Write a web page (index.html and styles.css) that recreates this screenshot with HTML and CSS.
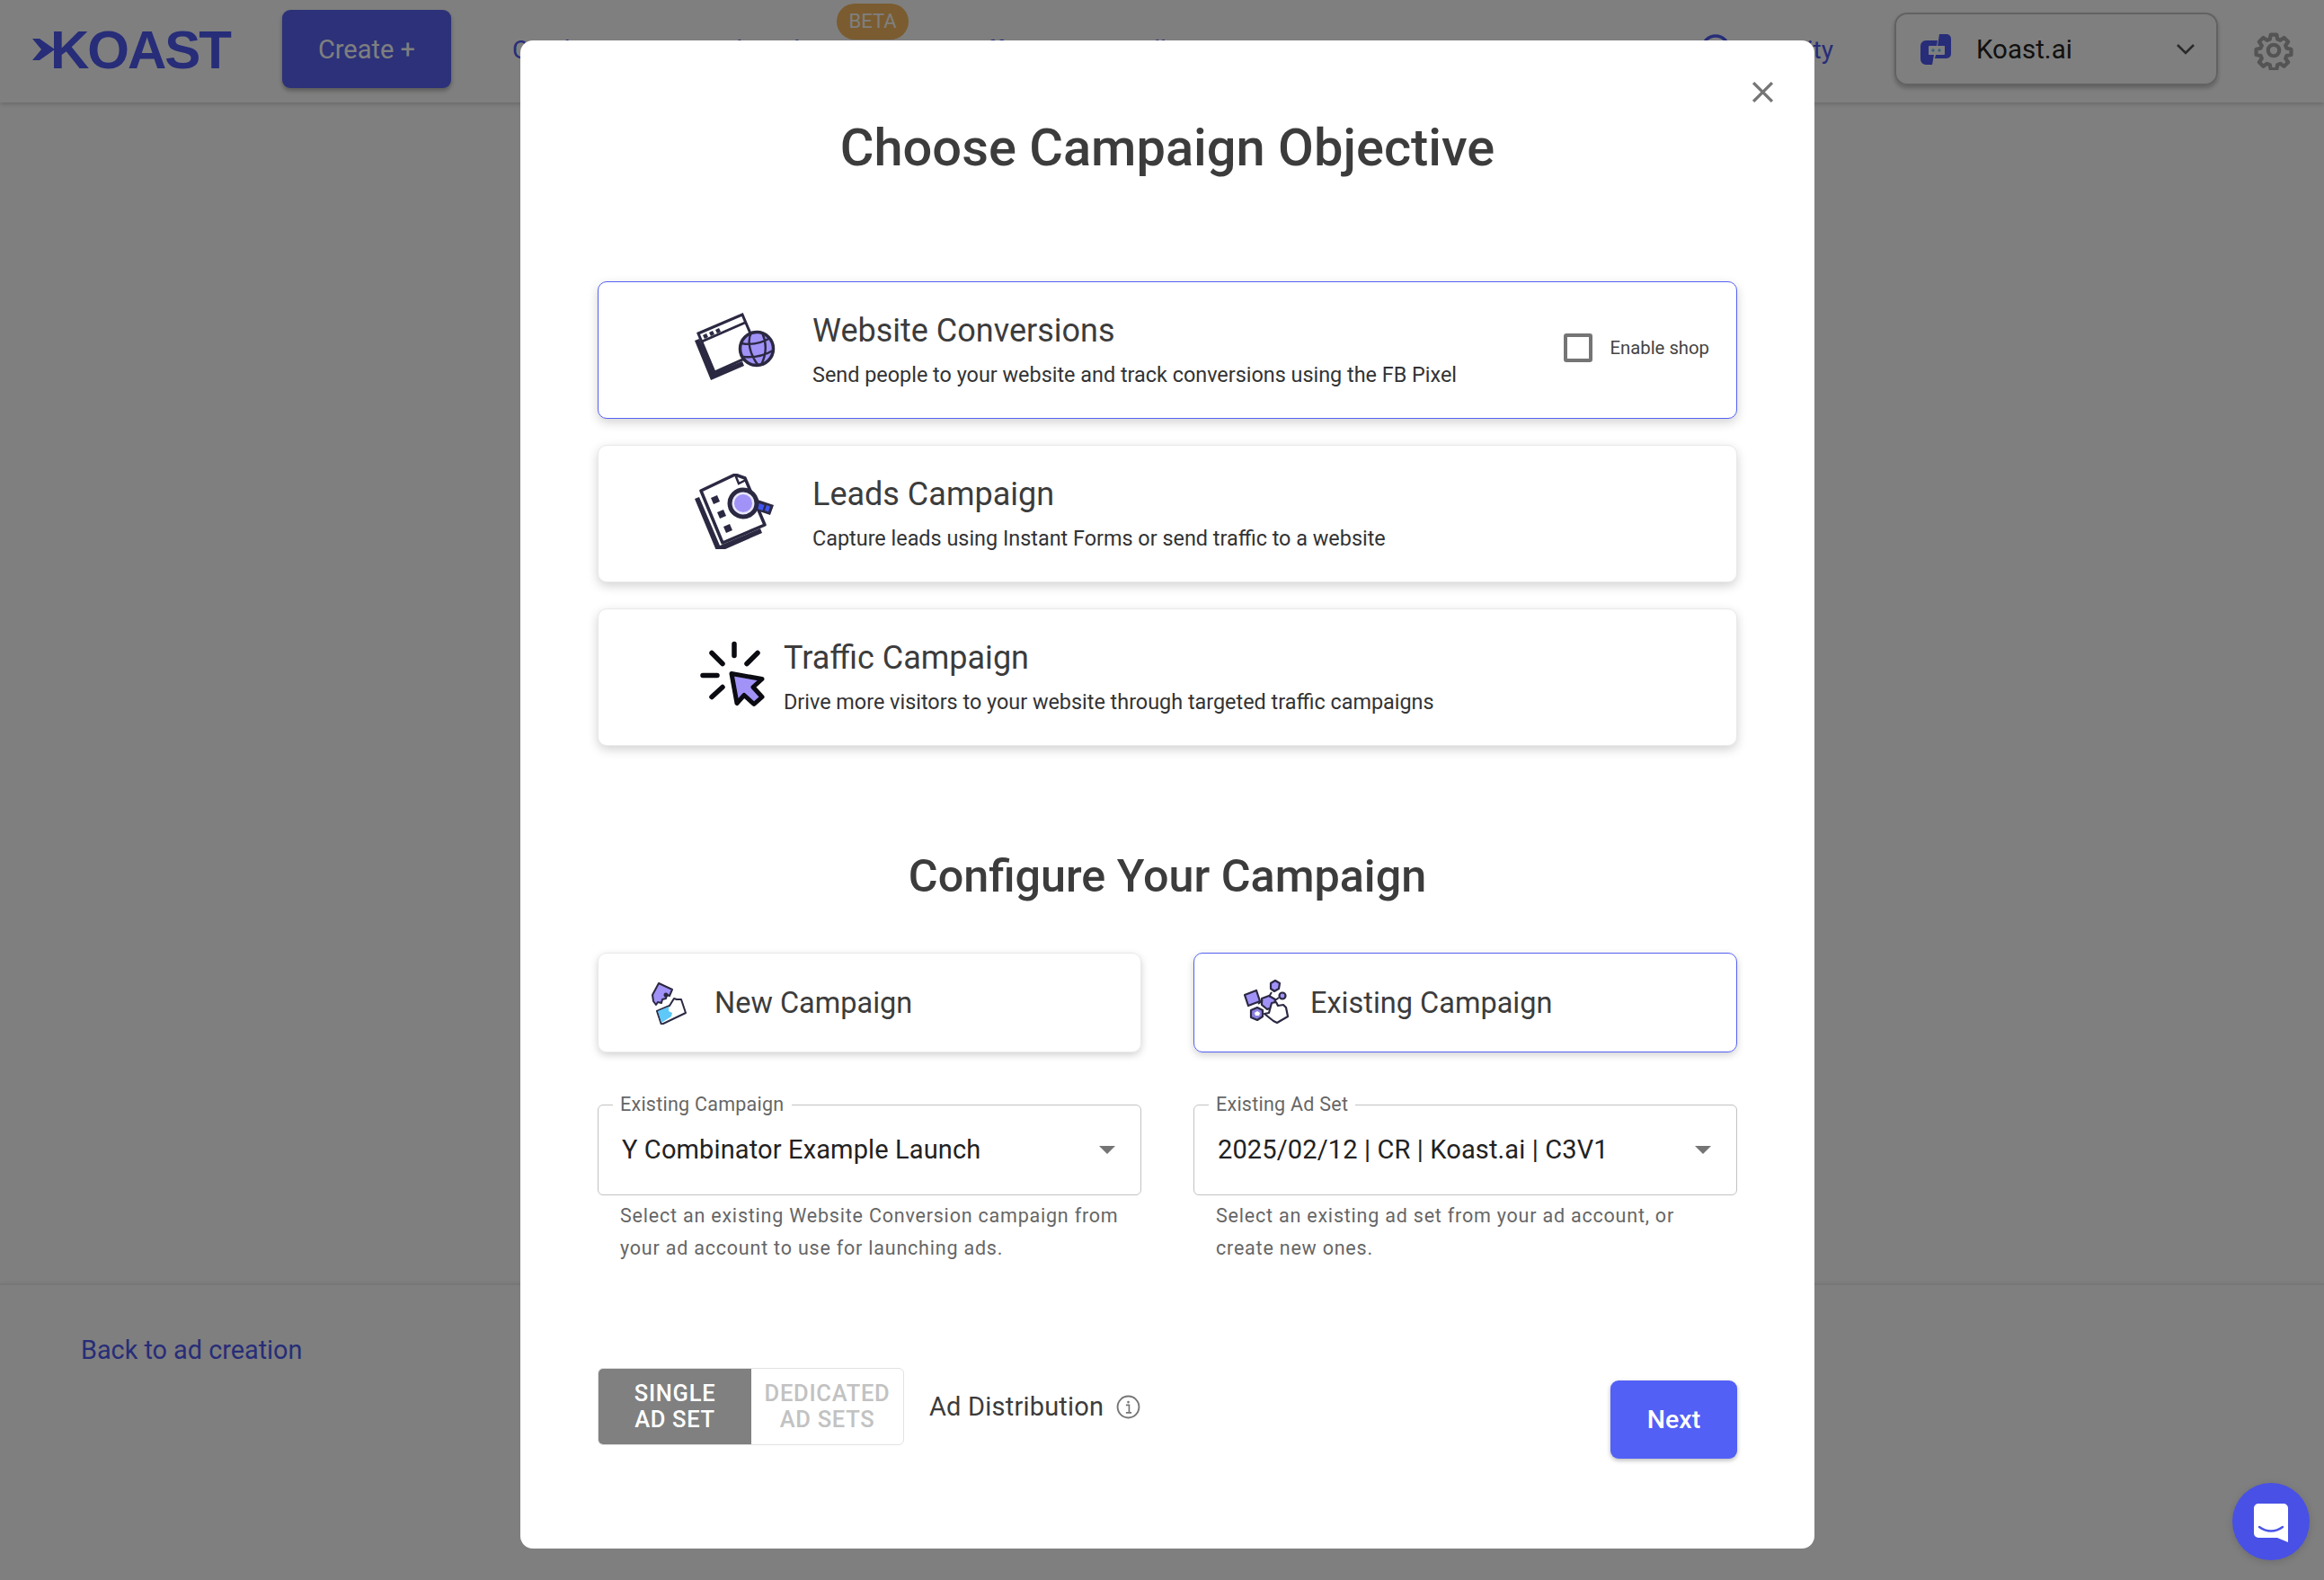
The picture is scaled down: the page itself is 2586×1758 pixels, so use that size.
FILE: index.html
```html
<!DOCTYPE html>
<html lang="en">
<head>
<meta charset="utf-8">
<title>Choose Campaign Objective</title>
<link rel="stylesheet" href="styles.css">
</head>
<body>
<div class="page">
  <header class="topbar">
    <div class="logo"><svg class="logo-mark" viewBox="0 0 25 24" width="25" height="24"><path d="M0 0h8l17 12L8 24H0l10-12z" fill="#4f5af0"/></svg><span class="logo-text">KOAST</span></div>
    <button class="create">Create +</button>
    <nav class="nav">
      <span class="nav-item nav-first">Catalog</span>
      <span class="nav-item nav-second">Ad Studio<span class="beta">BETA</span></span>
      <span class="nav-item nav-third">Offers</span>
      <span class="nav-item">Billing</span>
    </nav>
    <div class="activity"><svg viewBox="0 0 36 36" width="36" height="36"><circle cx="18" cy="18" r="15" fill="none" stroke="#4f5af0" stroke-width="3.4"/></svg><span>Activity</span></div>
    <div class="account">
      <svg viewBox="0 0 36 36" width="36" height="36"><path d="M22 1h8a5 5 0 0 1 5 5v17a5 5 0 0 1-5 5H17l1-4h9a1 1 0 0 0 1-1V14h-8z" fill="#4f5af0"/><path d="M7 8h13l-1 6h-8a1 1 0 0 0-1 1v9h6l-2 11H7a6 6 0 0 1-6-6V14a6 6 0 0 1 6-6z" fill="#4f5af0"/><circle cx="15" cy="19" r="1.7" fill="#6ec3f2"/><circle cx="22" cy="19" r="1.7" fill="#6ec3f2"/></svg>
      <span class="account-name">Koast.ai</span>
      <svg class="account-caret" viewBox="0 0 22 14" width="22" height="14"><path d="M2 2l9 9 9-9" fill="none" stroke="#555" stroke-width="2.6"/></svg>
    </div>
    <svg class="gear" viewBox="0 0 24 24" width="44" height="44"><path fill="none" stroke-width="2.3" stroke-linejoin="round" d="M10.2 2.5h3.6l.5 2.7 1.7.7 2.3-1.6 2.5 2.5-1.6 2.3.7 1.7 2.7.5v3.4l-2.7.5-.7 1.7 1.6 2.3-2.5 2.5-2.3-1.6-1.7.7-.5 2.7h-3.6l-.5-2.7-1.7-.7-2.3 1.6-2.5-2.5 1.6-2.3-.7-1.7-2.7-.5v-3.4l2.7-.5.7-1.7-1.6-2.3 2.5-2.5 2.3 1.6 1.7-.7z"/><circle cx="12" cy="12" r="3.4" fill="none" stroke-width="2.3"/></svg>
  </header>
  <main class="content"></main>
  <footer class="bottombar"><a class="back">Back to ad creation</a></footer>
</div>

<div class="overlay"></div>

<section class="modal">
  <svg class="close" viewBox="0 0 24 24" width="25" height="25"><path d="M2 2l20 20M22 2L2 22" stroke="#757575" stroke-width="3.2" fill="none"/></svg>
  <h1 class="title">Choose Campaign Objective</h1>

  <div class="objectives">
    <div class="card card-active">
      <svg class="obj-icon" viewBox="31 25 96 84" width="96" height="84">
        <path d="M33 59l18 44 37-16-2-5-31 12-17-37z" fill="#2b2942"/>
        <path d="M37 51l49-21 18 42-49 22z" fill="#fff" stroke="#2b2942" stroke-width="3"/>
        <path d="M41 60l48-21" stroke="#2b2942" stroke-width="3"/>
        <path d="M42 53l4-2 2 4-4 2zM49 50l4-2 2 4-4 2zM56 47l4-2 2 4-4 2z" fill="#2b2942"/>
        <circle cx="102" cy="68" r="18.5" fill="#a092f7" stroke="#2b2942" stroke-width="3.5"/>
        <path d="M85 62c10 2 22 0 32-6M87 77c11 1 23-1 33-7M96 50c-5 9-2 24 8 37M108 50c5 11 5 24-1 36" fill="none" stroke="#2b2942" stroke-width="2.4"/>
      </svg>
      <div class="card-text">
        <div class="card-title">Website Conversions</div>
        <div class="card-desc">Send people to your website and track conversions using the FB Pixel</div>
      </div>
      <label class="enable"><span class="check"></span><span>Enable shop</span></label>
    </div>
    <div class="card">
      <svg class="obj-icon" viewBox="31 14 96 84" width="96" height="84">
        <path d="M33 42l25 60 50-22-2-5-45 19-23-54z" fill="#2b2942"/>
        <path d="M40 33l38-18 11 4 22 52-47 20z" fill="#fff" stroke="#2b2942" stroke-width="3.5" stroke-linejoin="round"/>
        <path d="M78 15l4 10 8-4" fill="none" stroke="#2b2942" stroke-width="2.5"/>
        <path d="M51 41l7-3 3 7-7 3zM58 57l7-3 3 7-7 3zM65 73l7-3 3 7-7 3z" fill="#2b2942"/>
        <path d="M103 43l18 6-4 11-15-5z" fill="#2b2942"/>
        <path d="M104.500 47l6 2-2 6-6-2zM113 49l4 1.500-2 6-4-1.500z" fill="#3f55f0"/>
        <circle cx="87" cy="47" r="15" fill="#e8e6fb" stroke="#2b2942" stroke-width="5"/>
        <circle cx="87" cy="47" r="10" fill="#a092f7"/>
      </svg>
      <div class="card-text">
        <div class="card-title">Leads Campaign</div>
        <div class="card-desc">Capture leads using Instant Forms or send traffic to a website</div>
      </div>
    </div>
    <div class="card card-traffic">
      <svg class="traffic-icon" viewBox="19 9.500 76 76" width="76" height="76">
        <g stroke="#0b0b12" stroke-width="5.500" stroke-linecap="round" fill="none"><path d="M57 15v13M32 25l12 12M83 25L71 37M22 50h16M32 74l12-11"/></g>
        <path d="M54 48l34 6-10 9 10 11-9 8-11-10-8 9z" fill="#a092f7" stroke="#0b0b12" stroke-width="5" stroke-linejoin="round"/>
      </svg>
      <div class="card-text">
        <div class="card-title">Traffic Campaign</div>
        <div class="card-desc">Drive more visitors to your website through targeted traffic campaigns</div>
      </div>
    </div>
  </div>

  <h2 class="subtitle">Configure Your Campaign</h2>

  <div class="two-col choice-row">
    <div class="choice">
      <svg class="choice-new" viewBox="24 12 44 54" width="44" height="54">
        <path d="M33 20l15 7-3 7-3-1-1 4-4 1-1 4-4-1-2 3-3-4-1-7z" fill="#a092f7" stroke="#2b2942" stroke-width="2" stroke-linejoin="round"/>
        <circle cx="41" cy="33" r="2.500" fill="#2b2942"/>
        <path d="M31 51l14-6 5-8 3 1 5 0 5 15-27 13z" fill="#fff" stroke="#2b2942" stroke-width="2" stroke-linejoin="round"/>
        <path d="M32 51l12-5 0 5 4 2-1 4-11 7z" fill="#5ec8f8"/>
      </svg>
      <span>New Campaign</span>
    </div>
    <div class="choice choice-active">
      <svg class="choice-existing" viewBox="24 16 52 50" width="52" height="50">
        <g stroke="#2b2942" stroke-width="2.200" stroke-linejoin="round" fill="#a092f7">
          <path d="M25 34l13-5 4 12-13 5z"/>
          <path d="M44 38l8-3 7 4-1 8-8 3-6-5z"/>
          <path d="M54 21l5-3 5 3-1 6-5 3-4-3z"/>
          <circle cx="67" cy="35" r="3.500"/>
          <path d="M32 51l7-3 6 3 0 7-6 4-7-3z" fill="#8b80e0"/>
          <path d="M55 43l5-1 2 4 6-1 3 3 2 10-12 7-4-2-10-8 5-1z" fill="#fff"/>
        </g>
        <path d="M40 44l5-4M55 31l-3 5M63 37l-4 3" stroke="#2b2942" stroke-width="2"/>
        <path d="M36 54l3-2 3 2-1 3-4 0z" fill="#fff"/>
      </svg>
      <span>Existing Campaign</span>
    </div>
  </div>

  <div class="two-col field-row">
    <div class="field-group">
      <fieldset class="field">
        <legend>Existing Campaign</legend>
        <span class="field-value">Y Combinator Example Launch</span>
        <span class="field-caret"></span>
      </fieldset>
      <p class="help">Select an existing Website Conversion campaign from your ad account to use for launching ads.</p>
    </div>
    <div class="field-group">
      <fieldset class="field">
        <legend>Existing Ad Set</legend>
        <span class="field-value">2025/02/12 | CR | Koast.ai | C3V1</span>
        <span class="field-caret"></span>
      </fieldset>
      <p class="help">Select an existing ad set from your ad account, or create new ones.</p>
    </div>
  </div>

  <div class="actions">
    <div class="toggle">
      <span class="toggle-on">SINGLE<br>AD SET</span>
      <span class="toggle-off">DEDICATED<br>AD SETS</span>
    </div>
    <span class="dist-label">Ad Distribution</span>
    <svg class="info" viewBox="0 0 26 26" width="27" height="27"><circle cx="13" cy="13" r="11.500" fill="none" stroke="#757575" stroke-width="1.800"/><circle cx="13" cy="7.800" r="1.300" fill="#757575"/><path d="M10.500 11h3.400v8M10.500 19.200h6" fill="none" stroke="#757575" stroke-width="1.600"/></svg>
    <button class="next">Next</button>
  </div>
</section>

<div class="chat"><svg viewBox="0 0 40 44" width="40" height="44"><path d="M6 0h28a5 5 0 0 1 5 5v38l-12-5H6a5 5 0 0 1-5-5V5a5 5 0 0 1 5-5z" fill="#fff"/><path d="M7 26c8 6 18 6 26 0" fill="none" stroke="#4b55e8" stroke-width="2.400" stroke-linecap="round"/></svg></div>
</body>
</html>
```

FILE: styles.css
```css
* { box-sizing: border-box; }
html, body { margin: 0; padding: 0; height: 100%; }
body { font-family: Roboto, "Liberation Sans", sans-serif; background: #fff; color: #3c3c3c; overflow: hidden; }

.page { display: flex; flex-direction: column; height: 1758px; }
.topbar { height: 114px; display: flex; align-items: center; padding: 0 34px 0 36px; box-shadow: 0 2px 5px rgba(0,0,0,.18); position: relative; }
.logo { display: flex; align-items: center; width: 222px; margin-top: -3px; }
.logo-mark { flex: none; margin-top: -2px; }
.logo-text { font-family: "Liberation Sans", sans-serif; font-weight: 700; font-size: 60px; letter-spacing: -2px; color: #4f5af0; margin-left: -5px; line-height: 1; }
.create { width: 188px; height: 87px; margin: -5px 0 0 56px; border: 0; border-radius: 9px; background: #5862f2; color: #fff; font: 400 29px Roboto, sans-serif; box-shadow: 0 3px 5px rgba(0,0,0,.3); }
.nav { flex: 1; display: flex; margin-left: 68px; font-size: 28px; color: #4f5af0; }
.nav-item { position: relative; white-space: nowrap; margin-top: -4px; }
.nav-first { width: 222px; }
.nav-second { width: 286px; }
.nav-third { width: 182px; }
.beta { position: absolute; left: 139px; top: -35px; width: 80px; height: 40px; border-radius: 20px; background: #f4b860; color: #fff; font-size: 22px; display: flex; align-items: center; justify-content: center; }
.activity { display: flex; align-items: center; gap: 21px; font-size: 28px; color: #4f5af0; margin-right: 68px; margin-top: -4px; }
.account { width: 360px; height: 81px; border: 2px solid #c4c4c4; border-radius: 14px; display: flex; align-items: center; padding: 0 23px 0 26px; box-shadow: 0 3px 5px rgba(0,0,0,.25); margin-top: -5px; }
.account-name { flex: 1; margin-left: 27px; font-size: 29.5px; color: #222; }
.gear { margin-left: 40px; flex: none; margin-top: -3px; }
.gear path, .gear circle { stroke: #a8a8a8; }
.content { flex: 1; }
.bottombar { height: 330px; border-top: 2px solid #eee; padding: 54px 90px; box-shadow: 0 -1px 4px rgba(0,0,0,.06); }
.back { font-size: 28.8px; color: #4f5af0; line-height: 36px; }

.overlay { position: fixed; inset: 0; background: rgba(0,0,0,.5); }

.modal { position: absolute; left: 579px; top: 45px; width: 1440px; height: 1678px; background: #fff; border-radius: 14px; padding: 0 86px; display: flex; flex-direction: column; }
.close { position: absolute; right: 45px; top: 45px; }
.title { margin: 89px 0 0; height: 60px; text-align: center; font-size: 57.8px; line-height: 60px; font-weight: 500; color: #3c3c3c; }

.objectives { display: flex; flex-direction: column; gap: 29px; margin-top: 119px; }
.card { height: 153px; border-radius: 10px; border: 1px solid #e9e9e9; box-shadow: 0 4px 12px rgba(0,0,0,.18); display: flex; align-items: center; padding-left: 105px; background: #fff; }
.card-active { border-color: #5561f2; }
.obj-icon { flex: none; margin-right: 37px; margin-top: -6px; }
.traffic-icon { flex: none; margin: -9px 17px 0 0; }
.card-traffic { padding-left: 113px; }
.card-text { flex: 1; min-width: 0; margin-top: -1px; }
.card-title { font-size: 36px; line-height: 44px; color: #3c3c3c; }
.card-desc { font-size: 23.4px; line-height: 30px; margin-top: 12px; color: #333; }
.enable { display: flex; align-items: center; gap: 20px; font-size: 20.3px; color: #444; margin-right: 30px; margin-top: -6px; }
.check { width: 32px; height: 32px; border: 4px solid #757575; border-radius: 3px; }

.subtitle { margin: 115px 0 0; height: 60px; font-size: 50.3px; line-height: 60px; font-weight: 500; text-align: center; color: #3c3c3c; }
.two-col { display: grid; grid-template-columns: 1fr 1fr; gap: 58px; }
.choice-row { margin-top: 55px; }
.choice { height: 111px; border-radius: 10px; border: 1px solid #e9e9e9; box-shadow: 0 3px 8px rgba(0,0,0,.18); display: flex; align-items: center; padding-left: 58px; font-size: 32.5px; color: #3c3c3c; }
.choice-active { border-color: #5561f2; padding-left: 55px; }
.choice-new { flex: none; margin-right: 27px; margin-top: -6px; }
.choice-existing { flex: none; margin-right: 22px; margin-top: -4px; }

.field-row { margin-top: 45px; }
.field { margin: 0; height: 114px; border: 1.5px solid #c2c2c2; border-radius: 6px; padding: 0 26px; display: flex; align-items: center; position: relative; min-width: 0; }
.field legend { font-size: 21.5px; line-height: 26px; color: #666; padding: 0 8px; margin-left: -10px; letter-spacing: .25px; }
.field-value { flex: 1; font-size: 29px; color: #222; letter-spacing: .13px; margin-top: -14px; }
.field-caret { width: 0; height: 0; border-left: 9px solid transparent; border-right: 9px solid transparent; border-top: 9px solid #757575; margin-top: -12px; margin-right: 2px; }
.help { margin: 5px 0 0 25px; font-size: 21.5px; line-height: 36px; color: #666; letter-spacing: .79px; }

.actions { margin-top: auto; margin-bottom: 115px; display: flex; align-items: center; position: relative; height: 86px; }
.toggle { width: 341px; height: 86px; display: flex; border-radius: 6px; border: 1px solid #e2e2e2; overflow: hidden; font-size: 25.5px; line-height: 29px; font-weight: 500; text-align: center; letter-spacing: .7px; }
.toggle-on { width: 170px; background: #808080; color: #fff; display: flex; align-items: center; justify-content: center; }
.toggle-off { flex: 1; color: #c2c2c2; display: flex; align-items: center; justify-content: center; }
.dist-label { font-size: 29px; margin-left: 28px; margin-top: -1px; color: #3c3c3c; letter-spacing: .2px; }
.info { margin-left: 14px; flex: none; }
.next { position: absolute; right: 0; top: 14px; width: 141px; height: 87px; border: 0; border-radius: 9px; background: #5260f5; color: #fff; font: 500 28.5px Roboto, sans-serif; box-shadow: 0 2px 5px rgba(0,0,0,.28); }

.chat { position: absolute; left: 2484px; top: 1650px; width: 86px; height: 86px; border-radius: 50%; background: #4850e6; display: flex; align-items: center; justify-content: center; padding-top: 3px; box-shadow: 0 2px 8px rgba(0,0,0,.15); }
```
